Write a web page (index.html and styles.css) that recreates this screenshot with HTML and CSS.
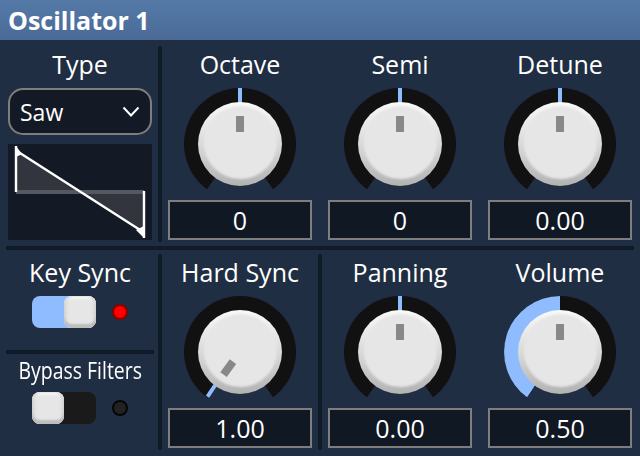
FILE: index.html
```html
<!DOCTYPE html>
<html lang="en">
<head>
<meta charset="utf-8">
<title>Oscillator 1</title>
<link rel="stylesheet" href="styles.css">
</head>
<body>
<svg class="defs" width="0" height="0" aria-hidden="true">
  <defs>
    <linearGradient id="rim" x1="0" y1="0" x2="0" y2="1">
      <stop offset="0" stop-color="#fafafa"/>
      <stop offset="0.5" stop-color="#dadada"/>
      <stop offset="1" stop-color="#b2b2b2"/>
    </linearGradient>
    <filter id="soft" x="-10%" y="-10%" width="120%" height="120%">
      <feGaussianBlur stdDeviation="0.8"/>
    </filter>
    <symbol id="knob-base" viewBox="0 0 112 112">
      <path class="track" d="M23.1 101.3A56 56 0 1 1 88.9 101.3L78 85A37 37 0 1 0 34 85Z"/>
    </symbol>
    <symbol id="knob-cap" viewBox="0 0 112 112">
      <circle cx="56" cy="56" r="42" fill="url(#rim)"/>
      <circle cx="56.4" cy="54.5" r="36.5" fill="#e6e6e6" filter="url(#soft)"/>
    </symbol>
  </defs>
</svg>
<main class="panel">
  <header class="title-bar">Oscillator 1</header>
  <section class="row row-top">
    <div class="side">
      <div class="label">Type</div>
      <div class="select"><span>Saw</span>
        <svg class="chev" width="18" height="11" viewBox="0 0 18 11"><path d="M1.5 1.5 9 9.5 16.5 1.5"/></svg>
      </div>
      <svg class="wave" width="144" height="96" viewBox="0 0 144 96">
        <rect width="144" height="96" fill="#131a25"/>
        <path d="M8 6V48H136V88Z" fill="#32353d"/>
        <rect x="8" y="46" width="128" height="4" fill="#55585f"/>
        <path class="wave-line" d="M8 48V2M8 6.5 136 88.5M136 47V94"/>
        <path d="M8 2 14 10 8 13Z M136 94 128 86 136 82Z" fill="#fff"/>
      </svg>
    </div>
    <div class="vsep"></div>
    <div class="knobs">
      <div class="knob-cell">
        <div class="label">Octave</div>
        <svg class="knob" width="112" height="112" viewBox="0 0 112 112">
          <use href="#knob-base"/>
          <rect class="val" x="54" y="0" width="4" height="16"/>
          <use href="#knob-cap"/>
          <rect class="pointer" x="52" y="28" width="8" height="16"/>
        </svg>
        <div class="value">0</div>
      </div>
      <div class="knob-cell">
        <div class="label">Semi</div>
        <svg class="knob" width="112" height="112" viewBox="0 0 112 112">
          <use href="#knob-base"/>
          <rect class="val" x="54" y="0" width="4" height="16"/>
          <use href="#knob-cap"/>
          <rect class="pointer" x="52" y="28" width="8" height="16"/>
        </svg>
        <div class="value">0</div>
      </div>
      <div class="knob-cell">
        <div class="label">Detune</div>
        <svg class="knob" width="112" height="112" viewBox="0 0 112 112">
          <use href="#knob-base"/>
          <rect class="val" x="54" y="0" width="4" height="16"/>
          <use href="#knob-cap"/>
          <rect class="pointer" x="52" y="28" width="8" height="16"/>
        </svg>
        <div class="value">0.00</div>
      </div>
    </div>
  </section>
  <div class="hsep"></div>
  <section class="row row-bottom">
    <div class="side">
      <div class="label">Key Sync</div>
      <div class="toggle-row">
        <div class="toggle on"><div class="thumb"></div></div>
        <div class="led led-on"></div>
      </div>
      <div class="hsep-small"></div>
      <div class="label label-small"><span class="squeeze">Bypass Filters</span></div>
      <div class="toggle-row">
        <div class="toggle"><div class="thumb"></div></div>
        <div class="led"></div>
      </div>
    </div>
    <div class="vsep"></div>
    <div class="knob-cell">
      <div class="label">Hard Sync</div>
      <svg class="knob" width="112" height="112" viewBox="0 0 112 112">
        <use href="#knob-base"/>
        <path class="val-line" d="M23.5 100.6 34 85"/>
        <use href="#knob-cap"/>
        <rect class="pointer" x="52" y="28" width="8" height="16" transform="rotate(-144 56 56)"/>
      </svg>
      <div class="value">1.00</div>
    </div>
    <div class="vsep"></div>
    <div class="knob-cell">
      <div class="label">Panning</div>
      <svg class="knob" width="112" height="112" viewBox="0 0 112 112">
        <use href="#knob-base"/>
        <rect class="val" x="54" y="0" width="4" height="16"/>
        <use href="#knob-cap"/>
        <rect class="pointer" x="52" y="28" width="8" height="16"/>
      </svg>
      <div class="value">0.00</div>
    </div>
    <div class="knob-cell knob-cell-last">
      <div class="label">Volume</div>
      <svg class="knob" width="112" height="112" viewBox="0 0 112 112">
        <use href="#knob-base"/>
        <path class="val-fill" d="M23.1 101.3A56 56 0 0 1 56 0V19A37 37 0 0 0 34 85Z"/>
        <use href="#knob-cap"/>
        <rect class="pointer" x="52" y="28" width="8" height="16"/>
      </svg>
      <div class="value">0.50</div>
    </div>
  </section>
</main>
</body>
</html>
```

FILE: styles.css
```css
* { box-sizing: border-box; }
html, body { margin: 0; padding: 0; }
body { width: 640px; height: 456px; overflow: hidden; background: #1f2e42; font-family: "Open Sans", "Noto Sans", sans-serif; color: #fff; }
.defs { display: block; height: 0; }
.panel { display: flex; flex-direction: column; width: 640px; height: 456px; }
.title-bar { height: 40px; padding-left: 8px; line-height: 40px; font-size: 25px; font-weight: 700; background: linear-gradient(#557aa8, #4a6a97); }
.row { display: flex; height: 196px; }
.row-top { margin-top: 6px; }
.row-bottom { margin-top: 4px; }
.hsep { height: 4px; margin: 4px 6px 0; flex: none; background: #111a27; }
.side { width: 158px; padding-left: 2px; display: flex; flex-direction: column; align-items: center; flex: none; }
.vsep { width: 4px; flex: none; background: #111a27; border-radius: 2px; }
.knobs { display: flex; gap: 4px; }
.knob-cell { width: 156px; flex: none; display: flex; flex-direction: column; align-items: center; }
.knob-cell-last { margin-left: 4px; }
.label { font-size: 25px; line-height: 36px; height: 36px; white-space: nowrap; }
.label-small { font-size: 24px; line-height: 32px; height: 32px; }
.squeeze { display: inline-block; transform: scaleX(.81); }
.knob { display: block; margin-top: 6px; }
.track { fill: #111; }
.val { fill: #8fbcff; }
.val-line { stroke: #8fbcff; stroke-width: 4; fill: none; }
.val-fill { fill: #8fbcff; }
.pointer { fill: #888; }
.value { width: 144px; height: 40px; border: 2px solid #7e7e7e; background: #101823; line-height: 36px; text-align: center; font-size: 25px; }
.select { width: 144px; height: 47px; margin-top: 6px; padding: 0 10px 0 10px; display: flex; align-items: center; justify-content: space-between; border: 2px solid #7e7e7e; border-radius: 15px; background: #131a25; font-size: 23px; }
.chev { fill: none; stroke: #fff; stroke-width: 2; }
.wave { display: block; margin-top: 9px; flex: none; }
.wave-line { fill: none; stroke: #fff; stroke-width: 2.4; }
.toggle-row { display: flex; align-items: center; gap: 16px; margin-top: 6px; }
.toggle { width: 64px; height: 32px; border-radius: 8px; background: #1a1a1a; display: flex; }
.toggle.on { background: #8fbcff; justify-content: flex-end; }
.thumb { width: 32px; height: 32px; border-radius: 8px; background: #e6e6e6; box-shadow: inset 0 -4px 2px #bdbdbd, inset 3px 0 2px #dadada, inset -3px 0 2px #dadada, inset 0 3px 2px #f6f6f6; }
.led { width: 16px; height: 16px; border-radius: 50%; background: #222; border: 2px solid #050505; }
.led-on { background: #ff0000; border-color: #8a0000; }
.hsep-small { width: 148px; height: 4px; margin-top: 22px; flex: none; background: #111a27; }
```
